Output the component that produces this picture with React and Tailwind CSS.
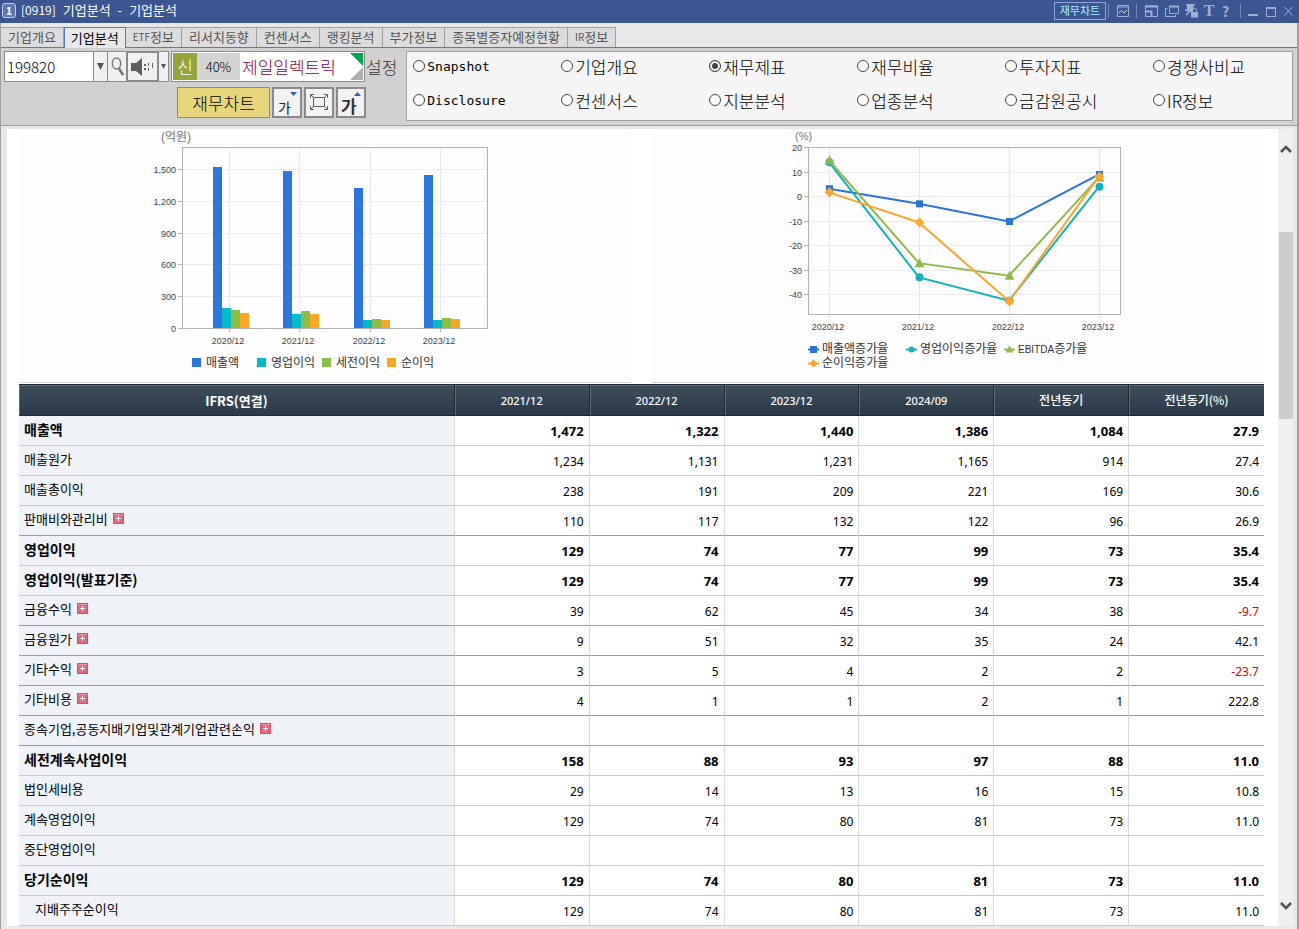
import { useState } from 'react';

const tabs = [
  { latin: '', name: '기업개요' },
  { latin: '', name: '기업분석' },
  { latin: 'ETF', name: '정보' },
  { latin: '', name: '리서치동향' },
  { latin: '', name: '컨센서스' },
  { latin: '', name: '랭킹분석' },
  { latin: '', name: '부가정보' },
  { latin: '', name: '종목별증자예정현황' },
  { latin: 'IR', name: '정보' },
];

const views = [
  'Snapshot', '기업개요', '재무제표', '재무비율', '투자지표', '경쟁사비교',
  'Disclosure', '컨센서스', '지분분석', '업종분석', '금감원공시', 'IR정보',
];

const columns = ['2021/12', '2022/12', '2023/12', '2024/09', '전년동기', '전년동기(%)'];

const rows = [
  { label: '매출액', bold: true, values: ['1,472', '1,322', '1,440', '1,386', '1,084', '27.9'] },
  { label: '매출원가', values: ['1,234', '1,131', '1,231', '1,165', '914', '27.4'] },
  { label: '매출총이익', values: ['238', '191', '209', '221', '169', '30.6'] },
  { label: '판매비와관리비', more: true, values: ['110', '117', '132', '122', '96', '26.9'] },
  { label: '영업이익', bold: true, values: ['129', '74', '77', '99', '73', '35.4'] },
  { label: '영업이익(발표기준)', bold: true, values: ['129', '74', '77', '99', '73', '35.4'] },
  { label: '금융수익', more: true, values: ['39', '62', '45', '34', '38', '-9.7'] },
  { label: '금융원가', more: true, values: ['9', '51', '32', '35', '24', '42.1'] },
  { label: '기타수익', more: true, values: ['3', '5', '4', '2', '2', '-23.7'] },
  { label: '기타비용', more: true, values: ['4', '1', '1', '2', '1', '222.8'] },
  { label: '종속기업,공동지배기업및관계기업관련손익', more: true, values: ['', '', '', '', '', ''] },
  { label: '세전계속사업이익', bold: true, values: ['158', '88', '93', '97', '88', '11.0'] },
  { label: '법인세비용', values: ['29', '14', '13', '16', '15', '10.8'] },
  { label: '계속영업이익', values: ['129', '74', '80', '81', '73', '11.0'] },
  { label: '중단영업이익', values: ['', '', '', '', '', ''] },
  { label: '당기순이익', bold: true, values: ['129', '74', '80', '81', '73', '11.0'] },
  { label: '지배주주순이익', indent: true, values: ['129', '74', '80', '81', '73', '11.0'] },
];

const years = ['2020/12', '2021/12', '2022/12', '2023/12'];

const barSeries = [
  { name: '매출액', color: '#2a78dd', values: [1519, 1480, 1322, 1440] },
  { name: '영업이익', color: '#00bbcc', values: [190, 132, 74, 77] },
  { name: '세전이익', color: '#8bbe47', values: [172, 160, 88, 93] },
  { name: '순이익', color: '#ffa524', values: [145, 132, 76, 82] },
];

const lineSeries = [
  { latin: '', name: '매출액증가율', color: '#2a74d2', mark: 'square', values: [3.2, -3, -10.2, 9] },
  { latin: '', name: '영업이익증가율', color: '#12b2bd', mark: 'circle', values: [14, -33, -42.5, 4] },
  { latin: 'EBITDA', name: '증가율', color: '#8fba4b', mark: 'triangle', values: [14.8, -27.2, -32.3, 7.8] },
  { latin: '', name: '순이익증가율', color: '#f9a62c', mark: 'diamond', values: [1.7, -10.6, -42.8, 8.2] },
];

function Marker({ type, x, y, color, r = 4 }) {
  if (type === 'square') return <rect x={x - r + 0.5} y={y - r + 0.5} width={r * 2 - 1} height={r * 2 - 1} fill={color} />;
  if (type === 'circle') return <circle cx={x} cy={y} r={r} fill={color} />;
  if (type === 'triangle') return <path d={`M${x} ${y - r - 1}L${x + r + 1} ${y + r}H${x - r - 1}Z`} fill={color} />;
  return <path d={`M${x} ${y - r - 1}L${x + r + 1} ${y}L${x} ${y + r + 1}L${x - r - 1} ${y}Z`} fill={color} />;
}

function BarChart() {
  const base = 199;
  const groups = [78, 148, 219, 289];
  const legend = [57, 122, 187, 252];
  return (
    <svg width="380" height="253" className="mx-auto block font-['Liberation_Sans','Noto_Sans_CJK_KR',sans-serif]" role="img" aria-label="매출액, 영업이익, 세전이익, 순이익">
      <text x="26" y="12" fontSize="12" fill="#777">(억원)</text>
      {groups.map((x) => (
        <path key={x} d={`M${x + 16}.5 19V199`} stroke="#e8eaec" />
      ))}
      {[0, 300, 600, 900, 1200, 1500].map((v) => {
        const y = Math.round(base - v * 0.106);
        return (
          <g key={v}>
            {v > 0 && <path d={`M48 ${y}.5H352`} stroke="#ececec" />}
            <path d={`M43 ${y}.5H47`} stroke="#b5b5b5" />
            <text x="41" y={y + 4} fontSize="9" fill="#444" textAnchor="end">{v.toLocaleString()}</text>
          </g>
        );
      })}
      <rect x="47.5" y="18.5" width="305" height="181" fill="none" stroke="#b0b2b4" />
      {barSeries.map((s, i) =>
        s.values.map((v, g) => {
          const h = Math.round(v * 0.106);
          return <rect key={s.name + g} x={groups[g] + i * 9} y={base - h} width="9" height={h} fill={s.color} />;
        })
      )}
      {years.map((year, g) => (
        <g key={year}>
          <path d={`M${groups[g] + 16}.5 200V203`} stroke="#b5b5b5" />
          <text x={groups[g] + 15} y="215" fontSize="9" fill="#444" textAnchor="middle">{year}</text>
        </g>
      ))}
      {barSeries.map((s, i) => (
        <g key={s.name}>
          <rect x={legend[i]} y="229" width="9" height="9" fill={s.color} />
          <text x={legend[i] + 14} y="238" fontSize="12" fill="#333">{s.name}</text>
        </g>
      ))}
    </svg>
  );
}

function LineChart() {
  const xs = [61, 151, 241, 331];
  const toY = (v) => 67.5 - v * 2.45;
  const legend = [[45, 220], [143, 220], [241, 220], [45, 234]];
  return (
    <svg width="380" height="253" className="mx-auto block font-['Liberation_Sans','Noto_Sans_CJK_KR',sans-serif]" role="img" aria-label="증가율">
      <text x="27" y="11" fontSize="11" fill="#777">(%)</text>
      {xs.map((x) => (
        <path key={x} d={`M${x}.5 19V185M${x}.5 187V190`} stroke="#e4e6e8" />
      ))}
      {[20, 10, 0, -10, -20, -30, -40].map((v) => {
        const y = Math.floor(toY(v));
        return (
          <g key={v}>
            {v < 20 && <path d={`M41 ${y}.5H352`} stroke="#ececec" />}
            <path d={`M36 ${y}.5H40`} stroke="#b5b5b5" />
            <text x="34" y={y + 4} fontSize="9" fill="#444" textAnchor="end">{v}</text>
          </g>
        );
      })}
      <rect x="40.5" y="18.5" width="312" height="167" fill="none" stroke="#b0b2b4" />
      {years.map((year, i) => (
        <text key={year} x={xs[i] - 1} y="201" fontSize="9" fill="#444" textAnchor="middle">{year}</text>
      ))}
      {lineSeries.map((s) => (
        <g key={s.name}>
          <polyline
            points={s.values.map((v, i) => `${xs[i]},${toY(v)}`).join(' ')}
            fill="none"
            stroke={s.color}
            strokeWidth="2"
          />
          {s.values.map((v, i) => (
            <Marker key={i} type={s.mark} x={xs[i] + 0.5} y={toY(v)} color={s.color} />
          ))}
        </g>
      ))}
      {lineSeries.map((s, i) => {
        const [x, y] = legend[i];
        return (
          <g key={s.name}>
            <path d={`M${x - 5} ${y + 0.5}H${x + 6}`} stroke={s.color} strokeWidth="2" />
            <Marker type={s.mark} x={x + 0.5} y={y + 0.5} color={s.color} r={s.mark === 'square' ? 4 : 3} />
            <text x={x + 9} y={y + 4} fontSize="12" fill="#333">
              {s.latin && <tspan fontSize="10">{s.latin}</tspan>}
              {s.name}
            </text>
          </g>
        );
      })}
    </svg>
  );
}

function TitleBar() {
  return (
    <header className="flex h-[23px] items-start justify-between bg-[#3a5792] pl-[2px] pr-[6px] text-[#9fb0d4]">
      <div className="flex h-[21px] items-center gap-[5px] text-white">
        <span className="flex h-[15px] w-[14px] items-center justify-center rounded-[3px] border border-[#c9d4ea] bg-[#5a77b4] text-[11px] font-bold leading-none">1</span>
        <h1 className="flex items-baseline gap-[7px] whitespace-nowrap pb-[2px] text-[13px] leading-none">
          <span className="text-[12px]">[0919]</span>
          <span>기업분석</span>
          <span>-</span>
          <span>기업분석</span>
        </h1>
      </div>
      <div className="flex h-[21px] items-center">
        <button className="mr-[2px] h-[18px] w-[52px] whitespace-nowrap border border-[#8fa6d6] text-[11px] leading-none text-[#a6f4ff]">재무차트</button>
        <i className="mr-[7px] h-[14px] w-px bg-[#7587ae]" />
        <button aria-label="차트" className="mr-[6px]">
          <svg width="14" height="14" viewBox="0 0 14 14" fill="none" stroke="currentColor">
            <path d="M1.500 1.500H12.500V12.500H1.500Z" />
            <path d="M1.500 3H12.500" />
            <path d="M3 9L5.500 6.500L8 9L11 6" stroke="#d8e2f5" />
          </svg>
        </button>
        <i className="mr-[8px] h-[14px] w-px bg-[#7587ae]" />
        <button aria-label="화면 축소" className="mr-[7px]">
          <svg width="13" height="14" viewBox="0 0 13 14" fill="none" stroke="currentColor">
            <path d="M.5 2H12.500V12.500H.5Z" />
            <path d="M0 2.500H13" strokeWidth="2" />
            <path d="M.5 7.500H6.500V12.500" strokeWidth="2" />
          </svg>
        </button>
        <button aria-label="화면 복사" className="mr-[6px]">
          <svg width="14" height="14" viewBox="0 0 14 14" fill="none" stroke="currentColor">
            <path d="M4.500 2.500H13.500V9.500H4.500Z" />
            <path d="M4 2.500H14" strokeWidth="2" />
            <path d="M2.500 4.500H.5V12.500H10.500V11" />
          </svg>
        </button>
        <button aria-label="고정" className="mr-[4px]">
          <svg width="14" height="15" viewBox="0 0 14 15" fill="currentColor">
            <path d="M1 1H10V2.500H8.500V6L7 8V9H5L1 13V11L3.500 8H0V6.500H2V2.500H1Z" />
            <path d="M6 9H13V14.500H6Z" />
            <path d="M7.500 9V7.500A2 2 0 0 1 11.500 7.500V9" fill="none" stroke="currentColor" />
          </svg>
        </button>
        <button className="mr-[6px] w-[12px] font-['Liberation_Serif',serif] text-[16px] font-bold leading-none">T</button>
        <button className="mr-[10px] w-[9px] text-[14px] font-bold leading-none">?</button>
        <i className="mr-[7px] h-[14px] w-px bg-[#7587ae]" />
        <button aria-label="최소화" className="mr-[8px]">
          <svg width="10" height="12"><path d="M0 10H10" stroke="currentColor" strokeWidth="2" /></svg>
        </button>
        <button aria-label="최대화" className="mr-[8px]">
          <svg width="10" height="12" fill="none" stroke="currentColor"><path d="M.5 2V11.500H9.500V2" /><path d="M0 3H10" strokeWidth="2" /></svg>
        </button>
        <button aria-label="닫기">
          <svg width="9" height="12" stroke="currentColor"><path d="M.5 2L8.500 10.500M8.500 2L.5 10.500" /></svg>
        </button>
      </div>
    </header>
  );
}

function StockBar() {
  return (
    <div className="shrink-0">
      <div className="flex h-[31px] items-stretch">
        <input
          aria-label="종목코드"
          defaultValue="199820"
          className="w-[90px] border border-[#8a8a8a] bg-white pl-[2px] text-[15px] font-light leading-none text-black outline-none"
        />
        <button aria-label="종목 목록" className="flex w-[14px] items-center justify-center border-y border-r border-[#8a8a8a] bg-[#f0f0f0]">
          <svg width="7" height="7" fill="#555"><path d="M0 0H7L3.500 7Z" /></svg>
        </button>
        <button aria-label="검색" className="flex w-[20px] items-center justify-center border-y border-r-2 border-[#8a8a8a] bg-[#f0f0f0]">
          <svg width="13" height="19" fill="none" stroke="#777" strokeWidth="1.500">
            <ellipse cx="5.500" cy="6.500" rx="4.200" ry="5.500" />
            <path d="M8 11.500L12 18" strokeWidth="2.500" />
          </svg>
        </button>
        <button aria-label="소리" className="flex w-[31px] items-center justify-center border-y-2 border-r-2 border-[#8a8a8a] bg-[#f0f0f0]">
          <svg width="23" height="18" fill="#5e5e5e">
            <path d="M0 5H5L11 0V18L5 13H0Z" />
            <path d="M13 6H15V8H13ZM13 10H15V12H13ZM17 5H18V8H17ZM17 10H18V13H17ZM21 5H22V10H21Z" />
          </svg>
        </button>
        <button aria-label="소리 설정" className="flex w-[10px] items-center justify-center border-y border-r border-[#8a8a8a] bg-[#f0f0f0]">
          <svg width="5" height="5" fill="#555"><path d="M0 0H5L2.500 5Z" /></svg>
        </button>
        <div className="relative ml-[2px] flex w-[194px] items-stretch border border-[#8a8a8a] bg-white p-px text-[17px] font-light leading-none">
          <span className="flex w-[24px] items-center justify-center bg-[#97a43c] text-white">신</span>
          <span className="flex w-[43px] items-center justify-center bg-[#d4d4d4] text-[13px] text-black">40%</span>
          <span className="flex items-center whitespace-nowrap pl-[2px] text-[#82003f]">제일일렉트릭</span>
          <svg width="13" height="27" className="absolute right-px top-px">
            <path d="M0 0H13V13Z" fill="#00a650" />
            <path d="M13 14V27H0Z" fill="#b3b0ac" />
          </svg>
        </div>
        <button className="ml-px whitespace-nowrap text-[17px] font-light leading-none text-[#333]">설정</button>
      </div>
      <div className="mt-[5px] flex h-[31px] gap-[2px] pl-[173px]">
        <button className="w-[93px] whitespace-nowrap border border-[#8a8a8a] bg-[#e8d67d] text-[17px] font-light leading-none text-black">재무차트</button>
        <button className="relative w-[30px] border-2 border-[#8a8a8a] bg-[#f2f2f2] text-[14px] leading-none text-[#222]">
          <span className="absolute bottom-[2px] left-[4px]">가</span>
          <svg width="7" height="4" className="absolute right-[3px] top-[3px]"><path d="M0 0H7L3.500 4Z" fill="#2f5fb0" /></svg>
        </button>
        <button aria-label="화면 맞춤" className="flex w-[30px] items-center justify-center border-2 border-[#8a8a8a] bg-[#f2f2f2]">
          <svg width="18" height="17" fill="none" stroke="#5e5e5e">
            <rect x="3.500" y="3.500" width="11" height="9" />
            <path d="M.5 4V.5H4M14 .5H17.500V4M17.500 12V15.500H14M4 15.500H.5V12" />
            <path d="M1 1L3.500 3.500M17 1L14.500 3.500M1 15L3.500 12.500M17 15L14.500 12.500" />
          </svg>
        </button>
        <button className="relative w-[30px] border-2 border-[#8a8a8a] bg-[#f2f2f2] text-[17px] font-bold leading-none text-[#333]">
          <span className="absolute bottom-[2px] left-[3px]">가</span>
          <svg width="7" height="4" className="absolute right-[3px] top-[3px]"><path d="M0 4H7L3.500 0Z" fill="#2f5fb0" /></svg>
        </button>
      </div>
    </div>
  );
}

function ViewPicker({ view, onChange }) {
  return (
    <div className="grid h-[70px] flex-1 grid-cols-[repeat(5,148fr)_139fr] grid-rows-[28px_28px] gap-y-[6px] border border-[#a0a0a0] bg-[#f5f5f5] pl-[6px]">
      {views.map((name) => (
        <label key={name} className="flex items-center gap-[2px] whitespace-nowrap text-[17px] font-light leading-none text-black">
          <input
            type="radio"
            name="view"
            checked={view === name}
            onChange={() => onChange(name)}
            className="h-[12px] w-[12px] appearance-none rounded-full border border-[#444] bg-white checked:bg-[#444] checked:shadow-[inset_0_0_0_2px_white]"
          />
          <span className={/^[A-Z][a-z]/.test(name) ? "font-['DejaVu_Sans_Mono',monospace] text-[13px]" : ''}>{name}</span>
        </label>
      ))}
    </div>
  );
}

function FinanceTable() {
  return (
    <table className="w-full table-fixed border-separate border-spacing-0">
      <thead>
        <tr className="h-[32px] text-white">
          <th className="w-[35%] border-y border-r border-y-[#1f2833] border-r-[#1f2833] bg-linear-to-b from-[#3d4e5b] to-[#2b394a] p-0 text-[13px] font-bold leading-none shadow-[inset_1px_1px_0_#5c6b79]">IFRS(연결)</th>
          {columns.map((c) => (
            <th
              key={c}
              className={`border-y border-r border-y-[#1f2833] border-r-[#1f2833] bg-linear-to-b from-[#3d4e5b] to-[#2b394a] p-0 font-medium leading-none shadow-[inset_1px_1px_0_#5c6b79] last:border-r-0 ${c.startsWith('20') ? "font-['Noto_Sans',sans-serif] text-[11px]" : 'text-[12px]'}`}
            >
              {c}
            </th>
          ))}
        </tr>
      </thead>
      <tbody>
        {rows.map((row) => {
          const line = row.more ? 'border-b-[#8ba0a8]' : 'border-b-[#c8c8c8]';
          return (
            <tr key={row.label} className={row.bold ? 'h-[30px] font-bold' : 'h-[30px]'}>
              <th className={`border-b border-r border-r-[#d8d8d8] bg-[#eff3f8] p-0 pb-[4px] text-left leading-none text-black ${line} ${row.bold ? 'text-[14px] font-bold' : 'text-[13px] font-normal'} ${row.indent ? 'pl-[16px]' : 'pl-[5px]'}`}>
                <span className="flex items-center gap-[5px] whitespace-nowrap">
                  {row.label}
                  {row.more && (
                    <button aria-label={`${row.label} 펼치기`}>
                      <svg width="11" height="11" className="block">
                        <rect x=".5" y=".5" width="10" height="10" fill="#ea6580" stroke="#d04f69" />
                        <path d="M1 1.500H10" stroke="#f695a6" />
                        <path d="M3 5.500H8M5.500 3V8" stroke="#fff" />
                      </svg>
                    </button>
                  )}
                </span>
              </th>
              {row.values.map((v, i) => (
                <td
                  key={i}
                  className={`border-b border-r border-r-[#d8d8d8] bg-white p-0 pr-[5px] pt-[2px] text-right font-['Noto_Sans',sans-serif] leading-none last:border-r-0 ${line} ${row.bold ? 'text-[13px]' : 'text-[12px]'} ${v.startsWith('-') ? 'text-[#e00000]' : 'text-black'}`}
                >
                  {v}
                </td>
              ))}
            </tr>
          );
        })}
      </tbody>
    </table>
  );
}

function ScrollBar() {
  return (
    <div className="flex w-[15px] shrink-0 flex-col bg-[#f0f0f0] pl-px">
      <button aria-label="위로" className="flex h-[40px] items-center justify-center">
        <svg width="12" height="8" fill="none" stroke="#505050" strokeWidth="2.500"><path d="M1 7L6 2L11 7" /></svg>
      </button>
      <div className="flex-1 pt-[63px]">
        <div className="h-[187px] bg-[#cdcdcd]" />
      </div>
      <button aria-label="아래로" className="flex h-[40px] items-center justify-center">
        <svg width="12" height="8" fill="none" stroke="#505050" strokeWidth="2.500"><path d="M1 1L6 6L11 1" /></svg>
      </button>
    </div>
  );
}

export default function App() {
  const [tab, setTab] = useState(1);
  const [view, setView] = useState('재무제표');

  return (
    <div className="min-h-screen bg-[#e8e8e8] font-['Noto_Sans_CJK_KR',sans-serif]">
      <TitleBar />
      <div className="border-l border-r-2 border-[#a0a0a0]">
        <nav className="flex h-[25px] items-end border-b border-[#4f7fb8]">
          {tabs.map((t, i) => (
            <button
              key={i}
              onClick={() => setTab(i)}
              className={
                i === tab
                  ? '-mb-px flex h-[21px] items-center whitespace-nowrap border-x border-t border-[#4f7fb8] bg-[#e8e8e8] px-[6px] pb-[2px] text-[13px] leading-none text-black'
                  : 'flex h-[20px] items-center whitespace-nowrap border-r border-t border-[#a0a0a0] bg-[#dcdcdc] px-[7px] pb-[2px] text-[13px] leading-none text-[#555]'
              }
            >
              {t.latin && <span className="text-[10px]">{t.latin}</span>}
              {t.name}
            </button>
          ))}
        </nav>
        <div className="flex h-[78px] gap-[9px] border-b border-[#a0a0a0] bg-[#d1d1d1] pl-[3px] pr-[4px] pt-[3px]">
          <StockBar />
          <ViewPicker view={view} onChange={setView} />
        </div>
        <div className="flex py-[3px] pl-[6px] pr-[4px]">
          <main className="flex-1 bg-white pl-[12px] pr-[14px]">
            <div className="mb-px grid grid-cols-2 gap-[21px]">
              <div className="border-b border-[#d9d6d6] bg-[#fdfdfd]"><BarChart /></div>
              <div className="border-b border-[#d9d6d6] bg-[#fdfdfd]"><LineChart /></div>
            </div>
            <FinanceTable />
          </main>
          <ScrollBar />
        </div>
      </div>
    </div>
  );
}
